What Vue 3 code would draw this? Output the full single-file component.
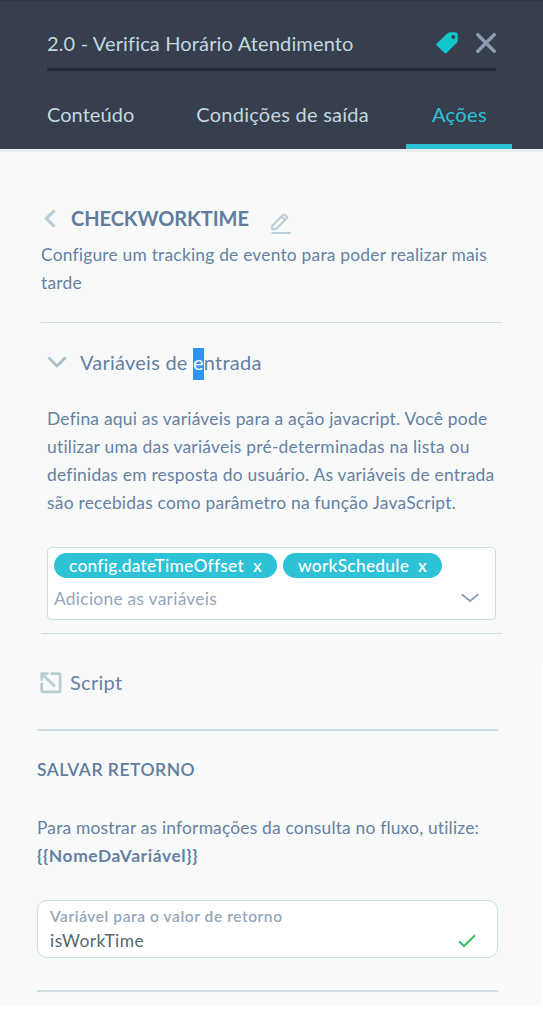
<script setup>
import { ref } from 'vue'

const tabs = [
  { id: 'content', label: 'Conteúdo' },
  { id: 'exits', label: 'Condições de saída' },
  { id: 'actions', label: 'Ações' },
]
const active = ref('actions')
const variables = ref(['config.dateTimeOffset', 'workSchedule'])
const codeVar = '{{NomeDaVariável}}'
function remove(v) {
  variables.value = variables.value.filter((x) => x !== v)
}
</script>

<template>
  <div class="panel">
    <header class="head">
      <div class="title-row">
        <h1>2.0 - Verifica Horário Atendimento</h1>
        <svg class="tag" width="22" height="22" viewBox="0 0 22 22">
          <path fill="#0fc7cd" fill-rule="evenodd" d="M12.4.8Q13 .3 14 .3H19.2Q21.7.3 21.7 2.8V8.6Q21.7 9.6 21 10.4L10.8 20.8Q9.5 21.9 8.2 20.8L1 13.7Q-.2 12.4 1 11.2L11 1.8ZM17.2 3.1a1.9 1.9 0 1 0 0 3.8a1.9 1.9 0 0 0 0-3.8Z" />
        </svg>
        <svg class="close" width="20" height="20" viewBox="0 0 20 20">
          <path d="M1.8 1.8 18.2 18.2M18.2 1.8 1.8 18.2" fill="none" stroke="#8c9db3" stroke-width="3.4" stroke-linecap="round" />
        </svg>
      </div>
      <nav class="tabs">
        <button v-for="t in tabs" :key="t.id" :class="['tab', t.id, { on: t.id === active }]" @click="active = t.id">{{ t.label }}</button>
      </nav>
    </header>

    <main class="upper">
      <section class="intro">
        <div class="name-row">
          <svg class="back" width="12" height="19" viewBox="0 0 12 19">
            <path d="M10.5 1.3 2.4 9.5 10.5 17.7" fill="none" stroke="#b9ced6" stroke-width="3.2" />
          </svg>
          <h2>CHECKWORKTIME</h2>
          <svg class="edit" width="20" height="21" viewBox="0 0 20 21">
            <path d="M1.2 16.3V12.7L12.1 1.8Q12.9 1 13.7 1.8L15.7 3.8Q16.5 4.6 15.7 5.4L4.8 16.3ZM10.5 3.5 13.9 6.9" fill="none" stroke="#b9ced6" stroke-width="2" stroke-linejoin="round" />
            <path d="M.5 20H19.8" stroke="#b9ced6" stroke-width="2" />
          </svg>
        </div>
        <p>Configure um tracking de evento para poder realizar mais<br>tarde</p>
      </section>

      <section class="inputs">
        <div class="sec-head">
          <svg class="chev" width="20" height="13" viewBox="0 0 20 13">
            <path d="M1.5 1.5 10 10 18.5 1.5" fill="none" stroke="#a9c0c9" stroke-width="2.8" />
          </svg>
          <h3>Variáveis de <span class="sel">e</span>ntrada</h3>
        </div>
        <p class="desc">Defina aqui as variáveis para a ação javacript. Você pode<br>utilizar uma das variáveis pré-determinadas na lista ou<br>definidas em resposta do usuário. As variáveis de entrada<br>são recebidas como parâmetro na função JavaScript.</p>
        <div class="select">
          <div class="chips">
            <span v-for="v in variables" :key="v" class="chip">{{ v }}<i @click="remove(v)">x</i></span>
          </div>
          <div class="entry">
            <span>Adicione as variáveis</span>
            <svg width="18" height="10" viewBox="0 0 18 10">
              <path d="M.7 1.2 9 8 17.3 1.2" fill="none" stroke="#8ea0b8" stroke-width="1.8" />
            </svg>
          </div>
        </div>
      </section>
    </main>

    <main class="lower">
      <section class="script">
        <svg width="22" height="22" viewBox="0 0 22 22">
          <path d="M10.5 1.7H19Q20.1 1.7 20.1 2.8V18.8Q20.1 19.9 19 19.9H2.8Q1.7 19.9 1.7 18.8V10.8M1.7 8.8V1.7H8.6M2.2 2.2 15 14.6" fill="none" stroke="#bacdd4" stroke-width="2.8" />
        </svg>
        <h3>Script</h3>
      </section>
      <section class="save">
        <h4>SALVAR RETORNO</h4>
        <p>Para mostrar as informações da consulta no fluxo, utilize:<br><b>{{ codeVar }}</b></p>
        <div class="field">
          <div>
            <label>Variável para o valor de retorno</label>
            <div class="value">isWorkTime</div>
          </div>
          <svg width="18" height="14" viewBox="0 0 18 14">
            <path d="M1 7.3 6 12 17 1.2" fill="none" stroke="#36bf69" stroke-width="2" />
          </svg>
        </div>
      </section>
    </main>
  </div>
</template>

<style>
body { margin: 0; background: #fff; }
</style>

<style scoped>
* { box-sizing: border-box; }
.panel { width: 543px; height: 1019px; overflow: hidden; font-family: Lato, "Open Sans", sans-serif; color: #6580a3; }
h1, h2, h3, h4, p { margin: 0; font-weight: 400; }
svg { display: block; flex: none; }
.head { height: 149px; padding: 0 31px 0 47px; background: #373f4e; border-top: 1px solid #2f3746; color: #c1d8df; }
.title-row { display: flex; align-items: center; width: 449px; height: 70px; padding-top: 17px; border-bottom: 3px solid #252b37; }
h1 { flex: 1; font-size: 20px; line-height: 24px; letter-spacing: .15px; }
.tag { margin: -1px 18px 0 0; }
.close { margin-top: -1px; }
.tabs { display: flex; height: 78px; }
.tab { padding: 13px 0 0; border: 0; border-bottom: 5px solid transparent; background: none; color: inherit; font: 20px/24px Lato, sans-serif; letter-spacing: .05px; text-align: left; }
.exits { margin-left: 62px; width: 174px; white-space: nowrap; letter-spacing: .25px; }
.actions { margin-left: auto; width: 106px; padding-left: 26px; letter-spacing: .35px; }
.tab.on { color: #2cc3d6; border-color: #2cc3d6; }
.upper { height: 515px; padding: 0 41px; background: #f8faf9; border-top: 3px solid #e9f0f3; }
.intro { height: 171px; padding-top: 52px; border-bottom: 1px solid #c9e1e7; }
.name-row { display: flex; height: 37px; padding-left: 3px; }
.back { margin-top: 5px; }
h2 { width: 200px; margin-left: 15px; font-size: 20px; line-height: 28px; font-weight: 700; letter-spacing: -.05px; color: #607c9f; }
.edit { margin-top: 9px; }
p { font-size: 17.4px; line-height: 28px; letter-spacing: .21px; white-space: nowrap; }
.inputs { height: 311px; padding: 25px 6px 0; border-bottom: 1px solid #c9dfe5; }
.sec-head { display: flex; height: 34px; }
.chev { margin: 8px 13px 0 0; }
h3 { font-size: 20px; line-height: 28px; letter-spacing: .24px; }
.sel { display: inline-block; padding-bottom: 4px; background: #3390ff; color: #fff; }
.desc { padding-top: 23px; letter-spacing: .24px; }
.select { height: 73px; margin-top: 30px; padding: 5px 6px; background: #fff; border: 1px solid #c9dfe5; border-radius: 4px; }
.chips { display: flex; gap: 6px; }
.chip { height: 25px; padding: 0 15px; border-radius: 13px; background: #2dc2d6; color: #fff; font-size: 17.4px; line-height: 25px; font-weight: 500; letter-spacing: .23px; }
.chip i { margin-left: 9px; font-style: normal; }
.entry { display: flex; justify-content: space-between; align-items: center; height: 40px; padding-right: 10px; font-size: 17.4px; letter-spacing: .27px; color: #94a6bb; }
.lower { width: 541px; height: 341px; padding: 0 43px 0 37px; background: #f8faf9; }
.script { display: flex; height: 67px; padding: 8px 0 0 3px; border-bottom: 2px solid #c9dfe5; }
.script h3 { margin: -4px 0 0 8px; letter-spacing: .3px; }
.save { height: 261px; padding-top: 25px; border-bottom: 2px solid #cfdde2; }
h4 { font-size: 17.5px; line-height: 28px; font-weight: 600; letter-spacing: .5px; color: #607c9f; }
.save p { padding-top: 30px; letter-spacing: .19px; }
.save b { font-weight: 700; letter-spacing: .6px; }
.field { display: flex; justify-content: space-between; height: 58px; margin-top: 30px; padding: 4px 21px 0 12px; background: #fff; border: 1px solid #c9e1e7; border-radius: 10px; }
label { display: block; font-size: 15.5px; line-height: 23px; font-weight: 600; letter-spacing: .58px; color: #94a6bb; }
.value { font-size: 17.4px; line-height: 26px; letter-spacing: .5px; color: #55666f; }
.field svg { margin-top: 29px; }
</style>
